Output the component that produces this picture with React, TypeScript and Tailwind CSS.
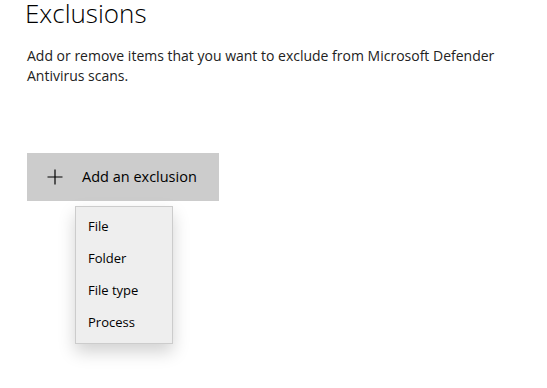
export default function App() {
  const items = ["File", "Folder", "File type", "Process"];
  return (
    <div className="h-[388px] w-[547px] overflow-hidden bg-white pl-[27px] text-[#000]" style={{ fontFamily: '"Open Sans", "Noto Sans", sans-serif' }}>
      <h1 className="-ml-[2px] text-[26px] font-light leading-[26px] text-black">Exclusions</h1>
      <p className="mt-[20px] w-[500px] text-[14px] leading-[20px] text-[#222]">
        Add or remove items that you want to exclude from Microsoft Defender Antivirus scans.
      </p>
      <div className="mt-[67px]">
        <button className="flex h-[48px] w-[192px] items-center bg-[#cccccc] pl-[20px] text-[14.5px] text-black">
          <svg width="16" height="16" viewBox="0 0 16 16" className="mr-[19px]">
            <path d="M8 0.5V15.5M0.5 8H15.5" stroke="#000" strokeWidth="1.2" fill="none" />
          </svg>
          Add an exclusion
        </button>
        <div className="ml-[48px] mt-[5px] flex w-[98px] flex-col border border-[#cccccc] bg-[#eeeeee] py-[4px] shadow-[0_8px_16px_rgba(0,0,0,0.18)]">
          {items.map((item) => (
            <div key={item} className="flex h-[32px] items-center pl-[12px] text-[13px] text-black">
              {item}
            </div>
          ))}
        </div>
      </div>
    </div>
  );
}
